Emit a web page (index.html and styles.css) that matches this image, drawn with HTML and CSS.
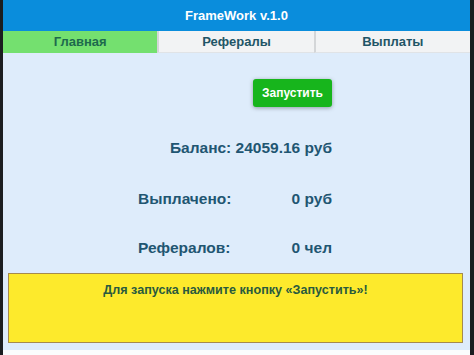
FILE: index.html
```html
<!doctype html>
<html lang="ru">
  <head>
    <meta charset="UTF-8" />
    <title>FrameWork v.1.0</title>
    <link rel="stylesheet" href="styles.css">
  </head>
  <body>
    <div class="frame">
      <div class="header">FrameWork v.1.0</div>
      <div class="tabs">
        <div class="tab active">Главная</div>
        <div class="tab">Рефералы</div>
        <div class="tab">Выплаты</div>
      </div>
      <div class="main">
        <div class="panel">
          <div class="actions">
            <button class="start">Запустить</button>
          </div>
          <div class="balance">Баланс: 24059.16 руб</div>
          <div class="row">
            <span>Выплачено:</span>
            <span>0 руб</span>
          </div>
          <div class="row">
            <span>Рефералов:</span>
            <span>0 чел</span>
          </div>
        </div>
        <div class="notice">Для запуска нажмите кнопку «Запустить»!</div>
      </div>
    </div>
  </body>
</html>
```

FILE: styles.css
```css
body {
  margin: 0;
  background: #1b1d20;
  font-family: "Liberation Sans", Arial, sans-serif;
  font-weight: bold;
}
.frame {
  margin: 0 4px 0 3px;
  height: 355px;
  background: #fbfcfd;
}
.header {
  height: 31px;
  line-height: 31px;
  background: #0a8ddc;
  color: #fff;
  font-size: 13px;
  text-align: center;
}
.tabs {
  display: flex;
  height: 22px;
}
.tab {
  flex: 1;
  line-height: 22px;
  text-align: center;
  font-size: 13px;
  color: #1f5566;
  background: #f2f3f4;
  border-left: 2px solid #d4d6d8;
  border-bottom: 1px solid #e0e3e6;
  box-sizing: border-box;
}
.tab.active {
  background: #74e06f;
  border-left: none;
  border-bottom: none;
  color: #1d6a4d;
}
.main {
  height: 297px;
  background: #deecfb;
  padding: 26px 7px 0 5px;
  box-sizing: border-box;
}
.panel {
  width: 194px;
  margin-left: 130px;
  color: #1f5672;
  font-size: 15.5px;
}
.actions {
  display: flex;
  justify-content: flex-end;
}
.start {
  width: 79px;
  height: 28px;
  padding: 0;
  border: none;
  border-radius: 3px;
  background: #17b51c;
  color: #fff;
  font-family: inherit;
  font-weight: bold;
  font-size: 12px;
  box-shadow: 0 1px 4px rgba(0, 0, 0, 0.35);
}
.balance {
  margin-top: 31px;
  text-align: right;
  line-height: 20px;
}
.row {
  display: flex;
  justify-content: space-between;
  margin-top: 31px;
  line-height: 20px;
}
.row + .row {
  margin-top: 29px;
}
.notice {
  margin-top: 15px;
  height: 70px;
  background: #fdea2c;
  border: 1px solid #a58a4e;
  box-sizing: border-box;
  padding-top: 9px;
  text-align: center;
  font-size: 12.6px;
  color: #2a5a3e;
}
```
